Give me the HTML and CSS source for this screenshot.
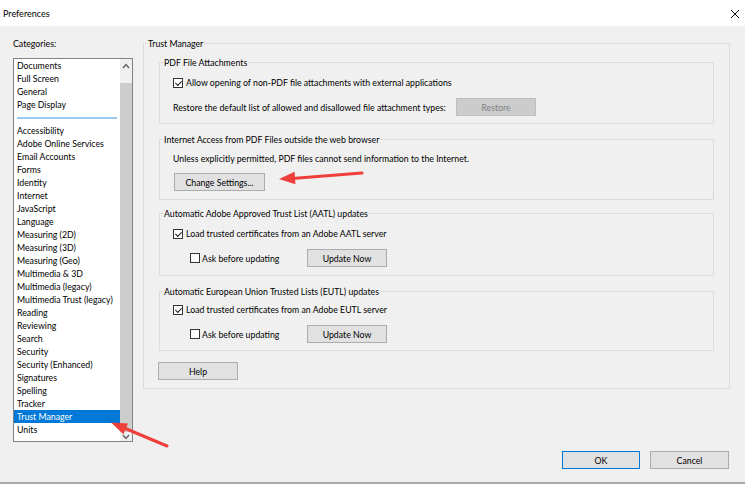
FILE: index.html
```html
<!DOCTYPE html>
<html lang="en">
<head>
    <meta charset="UTF-8">
    <meta name="viewport" content="width=device-width, initial-scale=1.0">
    <link rel="stylesheet" href="styles.css">
    <title>Preferences</title>
</head>
<body>
<div class="window">
    <div class="titlebar">
        <span>Preferences</span>
        <svg class="close" width="10" height="10" viewBox="0 0 10 10">
            <path d="M1 1 L9 9 M9 1 L1 9" stroke="#111" stroke-width="1" fill="none"/>
        </svg>
    </div>
    <div class="dialog">
        <div class="main">
            <div class="sidebar">
                <div class="label">Categories:</div>
                <div class="listbox">
                    <ul class="items">
                        <li>Documents</li>
                        <li>Full Screen</li>
                        <li>General</li>
                        <li>Page Display</li>
                        <li class="sep"><span></span></li>
                        <li>Accessibility</li>
                        <li>Adobe Online Services</li>
                        <li>Email Accounts</li>
                        <li>Forms</li>
                        <li>Identity</li>
                        <li>Internet</li>
                        <li>JavaScript</li>
                        <li>Language</li>
                        <li>Measuring (2D)</li>
                        <li>Measuring (3D)</li>
                        <li>Measuring (Geo)</li>
                        <li>Multimedia &amp; 3D</li>
                        <li>Multimedia (legacy)</li>
                        <li>Multimedia Trust (legacy)</li>
                        <li>Reading</li>
                        <li>Reviewing</li>
                        <li>Search</li>
                        <li>Security</li>
                        <li>Security (Enhanced)</li>
                        <li>Signatures</li>
                        <li>Spelling</li>
                        <li>Tracker</li>
                        <li class="selected">Trust Manager</li>
                        <li>Units</li>
                    </ul>
                    <div class="scrollbar">
                        <div class="scroll-up">
                            <svg width="8" height="6" viewBox="0 0 8 6"><path d="M1 5 L4 1.5 L7 5" stroke="#606060" stroke-width="1.4" fill="none"/></svg>
                        </div>
                        <div class="thumb"></div>
                        <div class="scroll-down">
                            <svg width="8" height="6" viewBox="0 0 8 6"><path d="M1 1 L4 4.5 L7 1" stroke="#606060" stroke-width="1.4" fill="none"/></svg>
                        </div>
                    </div>
                </div>
            </div>

            <div class="group panel">
                <div class="group-title">Trust Manager</div>

                <div class="group g1">
                    <div class="group-title">PDF File Attachments</div>
                    <div class="row check-row">
                        <span class="checkbox checked"></span>
                        <span>Allow opening of non-PDF file attachments with external applications</span>
                    </div>
                    <div class="row button-row">
                        <span class="restore-label">Restore the default list of allowed and disallowed file attachment types:</span>
                        <button class="btn disabled">Restore</button>
                    </div>
                </div>

                <div class="group g2">
                    <div class="group-title">Internet Access from PDF Files outside the web browser</div>
                    <div class="row text-row">Unless explicitly permitted, PDF files cannot send information to the Internet.</div>
                    <div class="row button-row">
                        <button class="btn change-btn">Change Settings...</button>
                    </div>
                </div>

                <div class="group g3">
                    <div class="group-title">Automatic Adobe Approved Trust List (AATL) updates</div>
                    <div class="row check-row">
                        <span class="checkbox checked"></span>
                        <span>Load trusted certificates from an Adobe AATL server</span>
                    </div>
                    <div class="row ask-row">
                        <span class="ask-label"><span class="checkbox"></span>Ask before updating</span>
                        <button class="btn">Update Now</button>
                    </div>
                </div>

                <div class="group g4">
                    <div class="group-title">Automatic European Union Trusted Lists (EUTL) updates</div>
                    <div class="row check-row">
                        <span class="checkbox checked"></span>
                        <span>Load trusted certificates from an Adobe EUTL server</span>
                    </div>
                    <div class="row ask-row">
                        <span class="ask-label"><span class="checkbox"></span>Ask before updating</span>
                        <button class="btn">Update Now</button>
                    </div>
                </div>

                <button class="btn help-btn">Help</button>
            </div>
        </div>

        <div class="footer">
            <button class="btn ok-btn">OK</button>
            <button class="btn cancel-btn">Cancel</button>
        </div>
    </div>

    <svg class="annotations" width="746" height="488" viewBox="0 0 746 488">
        <g stroke="#ee3f3a" stroke-width="3" stroke-linecap="round" fill="#ee3f3a">
            <line x1="362" y1="173" x2="292" y2="178.5"/>
            <line x1="167" y1="446" x2="123" y2="427.5"/>
        </g>
        <g fill="#ee3f3a">
            <polygon points="279,179 295.4,184.2 294.6,171.8"/>
            <polygon points="111,422.5 123.4,434.2 128,423.4"/>
        </g>
    </svg>
</div>
</body>
</html>
```

FILE: styles.css
```css
body {
    margin: 0;
    background-color: #ffffff;
    font-family: Lato, "Noto Sans", sans-serif;
    font-size: 8.75px;
    color: #000000;
}

.window {
    position: relative;
    width: 746px;
    height: 488px;
}

.titlebar {
    height: 26px;
    display: flex;
    align-items: center;
    justify-content: space-between;
    padding: 1px 6px 0 3px;
    box-sizing: border-box;
    font-size: 9px;
}

.dialog {
    width: 745px;
    height: 458px;
    box-sizing: border-box;
    background-color: #f0f0f0;
    border-bottom: 2px solid #a9a9a9;
}

.main {
    display: flex;
    align-items: flex-start;
    padding-left: 13px;
}

.sidebar {
    width: 120px;
    padding-top: 11px;
    margin-right: 10px;
}

.label {
    line-height: 14px;
    height: 13px;
    margin-bottom: 8px;
}

.listbox {
    display: flex;
    height: 384px;
    box-sizing: border-box;
    border: 1px solid #828282;
    background-color: #ffffff;
}

.items {
    list-style: none;
    margin: 0;
    padding: 0;
    width: 106px;
}

.items li {
    height: 13px;
    line-height: 14px;
    padding-left: 3px;
    white-space: nowrap;
}

.items li.selected {
    background-color: #0078d7;
    color: #ffffff;
}

.items li.sep {
    display: flex;
    align-items: center;
}

.items li.sep span {
    display: block;
    width: 100px;
    height: 2px;
    margin-top: 1px;
    background-color: #99c9ef;
}

.scrollbar {
    width: 12px;
    display: flex;
    flex-direction: column;
    background-color: #f0f0f0;
}

.scroll-up {
    height: 24px;
    display: flex;
    justify-content: center;
    padding-top: 4px;
    box-sizing: border-box;
}

.thumb {
    height: 349px;
    background-color: #cdcdcd;
}

.scroll-down {
    height: 9px;
    display: flex;
    justify-content: center;
    align-items: center;
}

.group {
    border: 1px solid #dcdcdc;
    box-sizing: border-box;
    display: flex;
    flex-direction: column;
}

.group-title {
    align-self: flex-start;
    margin: -7px 0 0 3px;
    padding: 0 1px;
    line-height: 14px;
    height: 13px;
    background-color: #f0f0f0;
    white-space: nowrap;
}

.panel {
    margin-top: 17px;
    width: 587px;
    height: 346px;
}

.panel > .group {
    margin-left: 15px;
    margin-right: 15px;
}

.row {
    margin-left: 13px;
    display: flex;
    align-items: center;
    white-space: nowrap;
}

.check-row {
    height: 13px;
}

.text-row {
    height: 13px;
    margin-top: 6px;
}

.button-row {
    height: 18px;
    margin-top: 9px;
}

.ask-row {
    height: 18px;
    margin-top: 9px;
    margin-left: 30px;
}

.g1 {
    margin-top: 12px;
    height: 62px;
}

.g1 .check-row {
    margin-top: 7px;
}

.g2 {
    margin-top: 15px;
    height: 61px;
}

.g2 .button-row {
    margin-top: 8px;
}

.g3 {
    margin-top: 13px;
    height: 63px;
}

.g3 .check-row {
    margin-top: 7px;
}

.g4 {
    margin-top: 15px;
    height: 60px;
}

.g4 .check-row {
    margin-top: 5px;
}

.checkbox {
    display: inline-block;
    width: 10px;
    height: 10px;
    box-sizing: border-box;
    border: 1px solid #333333;
    background-color: #ffffff;
    margin-right: 3px;
    flex-shrink: 0;
    position: relative;
}

.checkbox.checked::after {
    content: "";
    position: absolute;
    left: 1px;
    top: 0;
    width: 5px;
    height: 3px;
    border-left: 1px solid #222222;
    border-bottom: 1px solid #222222;
    transform: translate(0.5px, 1.5px) rotate(-45deg);
}

.restore-label {
    width: 283px;
}

.ask-label {
    width: 117px;
    display: flex;
    align-items: center;
}

.ask-label .checkbox {
    margin-right: 2px;
}

.btn {
    height: 18px;
    width: 80px;
    box-sizing: border-box;
    padding: 0;
    border: 1px solid #adadad;
    background-color: #e1e1e1;
    font-family: inherit;
    font-size: inherit;
    color: #000000;
    display: flex;
    align-items: center;
    justify-content: center;
}

.btn.disabled {
    background-color: #cccccc;
    border-color: #bfbfbf;
    color: #838383;
}

.change-btn {
    width: 91px;
    margin-left: 1px;
}

.help-btn {
    margin-top: 11px;
    margin-left: 14px;
}

.footer {
    display: flex;
    justify-content: flex-end;
    gap: 10px;
    margin-top: 9px;
    padding-right: 16px;
}

.ok-btn {
    width: 78px;
    border-color: #0078d7;
}

.cancel-btn {
    width: 79px;
}

.annotations {
    position: absolute;
    left: 0;
    top: 0;
    pointer-events: none;
}
```
